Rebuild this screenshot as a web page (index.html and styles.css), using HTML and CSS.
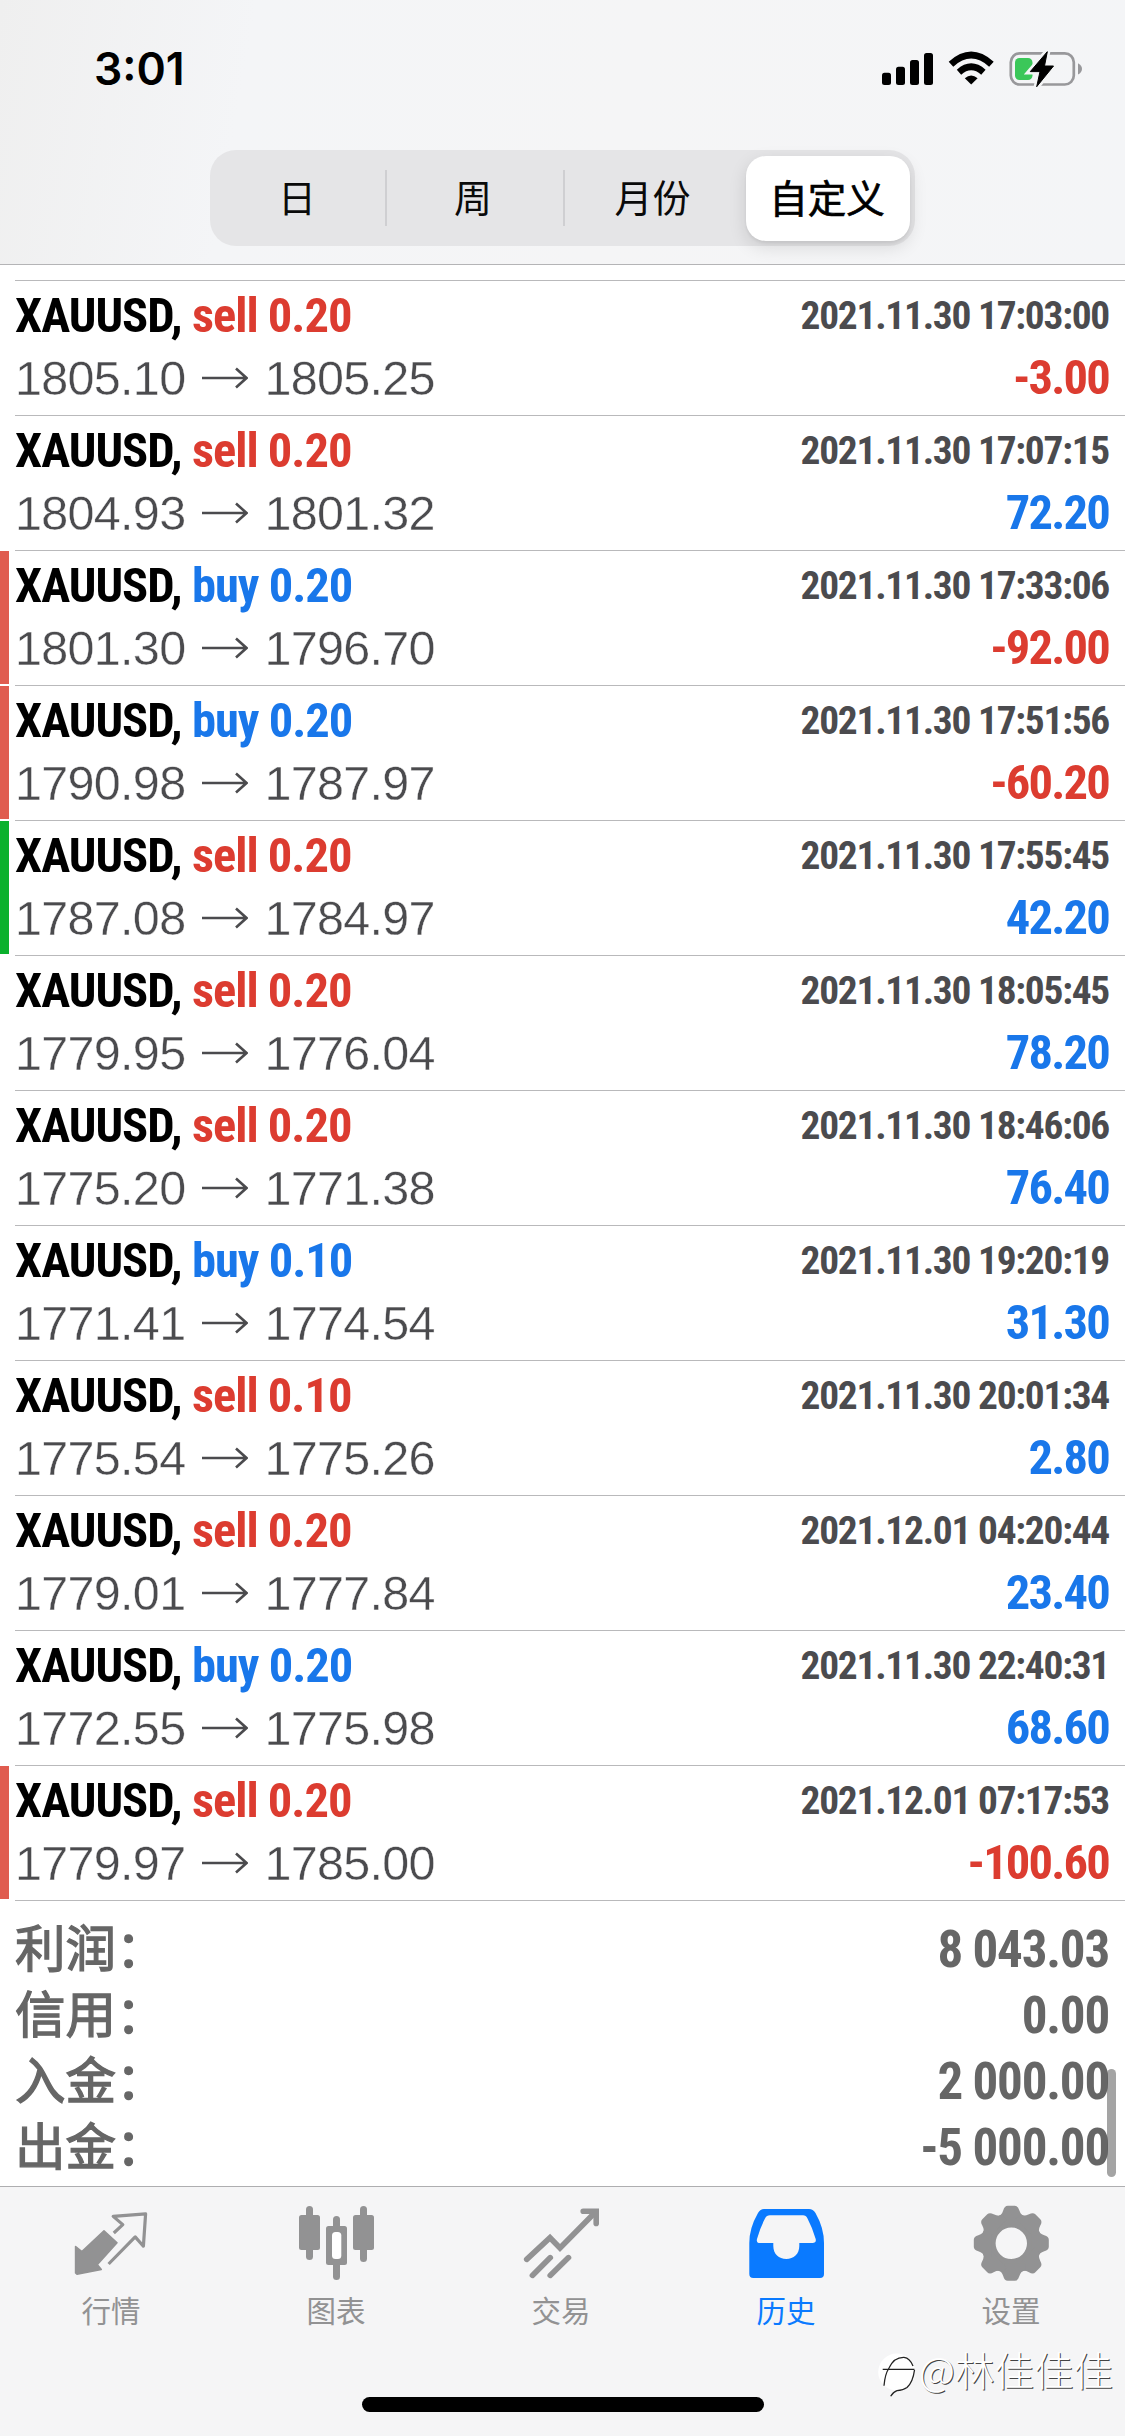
FILE: index.html
```
<!DOCTYPE html>
<html lang="zh-CN">
<head>
<meta charset="utf-8">
<title>历史</title>
<link rel="stylesheet" href="styles.css">
</head>
<body>
<svg class="defs" width="0" height="0"><symbol id="arrow" viewBox="0 0 46 24"><path d="M0 12H44M34 2.5L44.5 12L34 21.5" fill="none" stroke="currentColor" stroke-width="2.6"/></symbol></svg>
<div class="screen">
  <header class="header">
    <div class="status">
      <span class="time">3:01</span>
      <svg class="status-icons" viewBox="880 45 205 48">
        <rect x="882" y="72.7" width="9" height="12.3" rx="2.5"/>
        <rect x="896" y="66.7" width="9" height="18.3" rx="2.5"/>
        <rect x="910" y="60" width="9" height="25" rx="2.5"/>
        <rect x="924" y="53" width="9" height="32" rx="2.5"/>
        <path d="M971.2 84.6L964.8 78.2Q971.2 72.8 977.6 78.2Z"/>
        <path d="M959 72.2Q971.2 61.4 983.4 72.2" fill="none" stroke="#000" stroke-width="6.6"/>
        <path d="M951 64.2Q971.2 45.9 991.4 64.2" fill="none" stroke="#000" stroke-width="6.8"/>
        <rect x="1010.8" y="53.3" width="63" height="31.2" rx="9" fill="none" stroke="#98989b" stroke-width="2.7"/>
        <path d="M1078 63.3Q1082 65.5 1082 68.9T1078 74.5Z" fill="#98989b"/>
        <rect x="1015" y="58" width="17.5" height="22" rx="4.5" fill="#3bc759"/>
        <path d="M1047.3 51.7L1030.3 71.6H1040L1036.7 86.7L1053.5 66H1044.5Z" stroke="#f4f5f6" stroke-width="6"/>
        <path d="M1047.3 51.7L1030.3 71.6H1040L1036.7 86.7L1053.5 66H1044.5Z" stroke="#000" stroke-width="1" stroke-linejoin="round"/>
      </svg>
    </div>
    <nav class="segments">
      <span class="segment day">日</span>
      <span class="segment divided week">周</span>
      <span class="segment divided month">月份</span>
      <span class="segment selected">自定义</span>
    </nav>
  </header>

  <main class="list">
    <div class="top-line"></div>
    <article class="row"><i class="bar"></i><div class="body"><div class="line"><b class="symbol">XAUUSD,</b><b class="side sell">sell 0.20</b><b class="date">2021.11.30 17:03:00</b></div><div class="line"><span class="price">1805.10</span><svg class="to"><use href="#arrow"/></svg><span class="price">1805.25</span><b class="profit sell">-3.00</b></div></div></article>
    <article class="row"><i class="bar"></i><div class="body"><div class="line"><b class="symbol">XAUUSD,</b><b class="side sell">sell 0.20</b><b class="date">2021.11.30 17:07:15</b></div><div class="line"><span class="price">1804.93</span><svg class="to"><use href="#arrow"/></svg><span class="price">1801.32</span><b class="profit buy">72.20</b></div></div></article>
    <article class="row"><i class="bar stop"></i><div class="body"><div class="line"><b class="symbol">XAUUSD,</b><b class="side buy">buy 0.20</b><b class="date">2021.11.30 17:33:06</b></div><div class="line"><span class="price">1801.30</span><svg class="to"><use href="#arrow"/></svg><span class="price">1796.70</span><b class="profit sell">-92.00</b></div></div></article>
    <article class="row"><i class="bar stop"></i><div class="body"><div class="line"><b class="symbol">XAUUSD,</b><b class="side buy">buy 0.20</b><b class="date">2021.11.30 17:51:56</b></div><div class="line"><span class="price">1790.98</span><svg class="to"><use href="#arrow"/></svg><span class="price">1787.97</span><b class="profit sell">-60.20</b></div></div></article>
    <article class="row"><i class="bar take"></i><div class="body"><div class="line"><b class="symbol">XAUUSD,</b><b class="side sell">sell 0.20</b><b class="date">2021.11.30 17:55:45</b></div><div class="line"><span class="price">1787.08</span><svg class="to"><use href="#arrow"/></svg><span class="price">1784.97</span><b class="profit buy">42.20</b></div></div></article>
    <article class="row"><i class="bar"></i><div class="body"><div class="line"><b class="symbol">XAUUSD,</b><b class="side sell">sell 0.20</b><b class="date">2021.11.30 18:05:45</b></div><div class="line"><span class="price">1779.95</span><svg class="to"><use href="#arrow"/></svg><span class="price">1776.04</span><b class="profit buy">78.20</b></div></div></article>
    <article class="row"><i class="bar"></i><div class="body"><div class="line"><b class="symbol">XAUUSD,</b><b class="side sell">sell 0.20</b><b class="date">2021.11.30 18:46:06</b></div><div class="line"><span class="price">1775.20</span><svg class="to"><use href="#arrow"/></svg><span class="price">1771.38</span><b class="profit buy">76.40</b></div></div></article>
    <article class="row"><i class="bar"></i><div class="body"><div class="line"><b class="symbol">XAUUSD,</b><b class="side buy">buy 0.10</b><b class="date">2021.11.30 19:20:19</b></div><div class="line"><span class="price">1771.41</span><svg class="to"><use href="#arrow"/></svg><span class="price">1774.54</span><b class="profit buy">31.30</b></div></div></article>
    <article class="row"><i class="bar"></i><div class="body"><div class="line"><b class="symbol">XAUUSD,</b><b class="side sell">sell 0.10</b><b class="date">2021.11.30 20:01:34</b></div><div class="line"><span class="price">1775.54</span><svg class="to"><use href="#arrow"/></svg><span class="price">1775.26</span><b class="profit buy">2.80</b></div></div></article>
    <article class="row"><i class="bar"></i><div class="body"><div class="line"><b class="symbol">XAUUSD,</b><b class="side sell">sell 0.20</b><b class="date">2021.12.01 04:20:44</b></div><div class="line"><span class="price">1779.01</span><svg class="to"><use href="#arrow"/></svg><span class="price">1777.84</span><b class="profit buy">23.40</b></div></div></article>
    <article class="row"><i class="bar"></i><div class="body"><div class="line"><b class="symbol">XAUUSD,</b><b class="side buy">buy 0.20</b><b class="date">2021.11.30 22:40:31</b></div><div class="line"><span class="price">1772.55</span><svg class="to"><use href="#arrow"/></svg><span class="price">1775.98</span><b class="profit buy">68.60</b></div></div></article>
    <article class="row"><i class="bar stop"></i><div class="body"><div class="line"><b class="symbol">XAUUSD,</b><b class="side sell">sell 0.20</b><b class="date">2021.12.01 07:17:53</b></div><div class="line"><span class="price">1779.97</span><svg class="to"><use href="#arrow"/></svg><span class="price">1785.00</span><b class="profit sell">-100.60</b></div></div></article>
    <section class="totals">
      <div class="total"><span>利润：</span><b>8 043.03</b></div>
      <div class="total"><span>信用：</span><b>0.00</b></div>
      <div class="total"><span>入金：</span><b>2 000.00</b></div>
      <div class="total"><span>出金：</span><b>-5 000.00</b></div>
    </section>
    <div class="scrollbar"></div>
  </main>

  <footer class="footer">
    <nav class="tabs">
      <div class="tab">
        <svg class="icon" viewBox="71 2203 80 80">
          <path d="M75.6 2246.5L81.9 2251.6L104 2230.8L117 2242.8L97.2 2264.6L101.3 2269.4L77 2274.2L75.6 2273Z" fill="currentColor" stroke="currentColor" stroke-width="1.6" stroke-linejoin="round"/>
          <path d="M113.8 2233L122.8 2224.6L113.2 2216.4L145.6 2213.8L143.4 2246.2L135.2 2236.9L108.6 2264" fill="none" stroke="currentColor" stroke-width="3.2" stroke-linejoin="round"/>
        </svg>
        <span>行情</span>
      </div>
      <div class="tab">
        <svg class="icon" viewBox="296 2203 80 80" fill="currentColor">
          <rect x="299" y="2215" width="21" height="35" rx="2.5"/><rect x="306" y="2206" width="7" height="54" rx="3.5"/>
          <rect x="353" y="2215" width="21" height="35" rx="2.5"/><rect x="360" y="2206" width="7" height="56" rx="3.5"/>
          <rect x="326" y="2226" width="21" height="39" rx="2.5"/><rect x="333" y="2216" width="7" height="64" rx="3.5"/>
          <rect x="332" y="2232" width="9.3" height="27" rx="3.5" fill="#fff"/>
        </svg>
        <span>图表</span>
      </div>
      <div class="tab">
        <svg class="icon" viewBox="521 2203 80 80" fill="none" stroke="currentColor" stroke-width="5.6" stroke-linecap="round">
          <path d="M526.7 2259.4L550 2237.7L560 2248L595.5 2212"/>
          <path d="M583.2 2211.2H596.2V2223.4"/>
          <path d="M532.4 2275.4L550.3 2257.6M550.2 2275.4L568.5 2257.6"/>
        </svg>
        <span>交易</span>
      </div>
      <div class="tab active">
        <svg class="icon" viewBox="746 2203 80 80" fill="currentColor">
          <path fill-rule="evenodd" d="M764 2209H809Q813 2209 815.5 2213Q824 2228 824 2243V2274Q824 2278 820 2278H753.3Q749.3 2278 749.3 2274V2243Q749.3 2228 758 2213Q760.3 2209 764 2209ZM770 2215.3Q766.5 2215.3 765 2218.5Q760 2228 757 2239Q756 2243 760 2243H773.3V2246C773.3 2254 779 2259 786.3 2259S799.3 2254 799.3 2246V2243H812.5Q816.5 2243 815.7 2239Q812.5 2228 807.5 2218.5Q806 2215.3 803 2215.3Z"/>
        </svg>
        <span>历史</span>
      </div>
      <div class="tab">
        <svg class="icon" viewBox="-40.3 -40.3 80 80" fill="currentColor">
          <defs><path id="tooth" d="M-14 -26Q-9.5 -28 -8 -33Q-6.8 -37.5 -3.5 -37.5H3.5Q6.8 -37.5 8 -33Q9.5 -28 14 -26V-20H-14Z"/></defs>
          <circle r="23" fill="none" stroke="currentColor" stroke-width="14.6"/>
          <use href="#tooth"/><use href="#tooth" transform="rotate(45)"/><use href="#tooth" transform="rotate(90)"/><use href="#tooth" transform="rotate(135)"/><use href="#tooth" transform="rotate(180)"/><use href="#tooth" transform="rotate(225)"/><use href="#tooth" transform="rotate(270)"/><use href="#tooth" transform="rotate(315)"/>
        </svg>
        <span>设置</span>
      </div>
    </nav>
    <div class="home"></div>
    <div class="watermark">
      <svg viewBox="877 2350 40 50"><circle cx="896.7" cy="2373" r="18.5" fill="#fff"/><path d="M882.7 2370.4H914.5M884 2386.7Q885 2375 889 2369Q894 2358 904 2358.3Q910 2359 913 2367M914.5 2371Q913 2383 907 2388.5Q903 2391.5 897 2391.6Q893 2393 890.7 2397.3" fill="none" stroke="#222" stroke-width="1.3"/></svg>
      <span>@林佳佳佳</span>
    </div>
  </footer>
</div>
</body>
</html>
```
FILE: styles.css
```
* { box-sizing: border-box; }
body { margin: 0; background: #fff; font-family: "Noto Sans CJK SC", sans-serif; }
.defs { position: absolute; }
.screen { width: 1125px; height: 2436px; display: flex; flex-direction: column; overflow: hidden; }

.header { height: 265px; flex: none; border-bottom: 1px solid #b4b4b6; background: linear-gradient(100deg, #efefef 0, #f4f5f7 22%, #f5f5f6 55%, #f4f5f7 100%); }
.status { height: 150px; padding: 45px 40px 0 94px; display: flex; justify-content: space-between; align-items: flex-start; }
.time { font: 600 44.5px/48px Inter, sans-serif; }
.status-icons { width: 205px; height: 48px; }
.segments { width: 705px; height: 96px; margin-left: 210px; padding: 5px; border-radius: 26px; background: #e5e5e7; display: grid; grid-template-columns: 170px 178px 183px 164px; align-items: center; }
.segment { height: 56px; padding-bottom: 5px; display: flex; align-items: center; justify-content: center; font-size: 38px; line-height: 50px; font-weight: 400; color: #0a0a0a; }
.day { padding-right: 6px; }
.week { padding-right: 4px; }
.month { padding-right: 6px; }
.divided { border-left: 2px solid #cfcfd2; }
.selected { height: 85px; padding-right: 2px; border-radius: 20px; background: #fff; font-size: 38.5px; color: #000; -webkit-text-stroke: 0.7px #000; box-shadow: 0 6px 18px rgba(0, 0, 0, .12), 0 2px 3px rgba(0, 0, 0, .06); }

.list { position: relative; height: 1921px; flex: none; }
.top-line { height: 16px; margin-left: 15px; border-bottom: 1px solid #b9b9bb; }
.row { height: 135px; display: flex; }
.bar { width: 9px; height: 133px; }
.stop { background: #e05c50; }
.take { background: #0bb12d; }
.body { flex: 1; margin-left: 6px; padding: 3px 16px 0 0; border-bottom: 1px solid #b9b9bb; }
.line { display: flex; align-items: center; height: 63px; }
.line:first-child { height: 62px; }
.symbol, .side, .date, .profit, .total b { font-family: Roboto, sans-serif; font-stretch: 75%; font-weight: 700; white-space: pre; }
.symbol { width: 177px; font-size: 48.5px; letter-spacing: -1px; }
.side { font-size: 48.5px; letter-spacing: -1px; }
.sell { color: #dc3c30; }
.buy { color: #1977ea; }
.date { margin-left: auto; font-size: 39.4px; letter-spacing: -1.25px; color: #4b4b4e; }
.price { font: 400 48.5px/62px "Liberation Sans", Arial, sans-serif; letter-spacing: -.7px; color: #4b4b4e; -webkit-text-stroke: .4px #fff; }
.to { width: 46px; height: 24px; margin: 0 16px 0 17px; color: #4b4b4e; }
.profit { margin-left: auto; font-size: 48.5px; letter-spacing: -1.8px; }
.totals { padding: 16px 16px 0 15px; color: #666; }
.total { height: 66px; display: flex; align-items: center; justify-content: space-between; }
.total span { font-family: "Liberation Sans", "Noto Sans CJK SC", sans-serif; font-size: 50.5px; line-height: 60px; -webkit-text-stroke: 1.3px #666; }
.total b { margin-top: -2px; font-size: 51px; letter-spacing: -1.2px; }
.scrollbar { position: absolute; right: 9px; top: 1804px; width: 9px; height: 108px; border-radius: 5px; background: rgba(80, 80, 80, .52); }

.footer { position: relative; flex: 1; border-top: 1px solid #aeaeb0; background: #f5f5f6; }
.tabs { display: grid; grid-template-columns: repeat(5, 1fr); height: 210px; padding-top: 16px; }
.tab { display: flex; flex-direction: column; align-items: center; padding-right: 3px; color: #929293; font-size: 29.5px; line-height: 36px; }
.tab span { margin-top: 8px; }
.icon { width: 80px; height: 80px; }
.active { color: #0a7aff; }
.home { width: 402px; height: 15px; margin: 0 auto; border-radius: 8px; background: #000; }
.watermark { position: absolute; left: 877px; top: 162px; display: flex; align-items: flex-start; font-size: 39.5px; line-height: 48px; font-weight: 300; color: #fff; text-shadow: 1px 1px 0 #444; white-space: nowrap; }
.watermark span { margin-top: -4px; }
.watermark svg { width: 40px; height: 50px; margin-right: 2px; }
```
